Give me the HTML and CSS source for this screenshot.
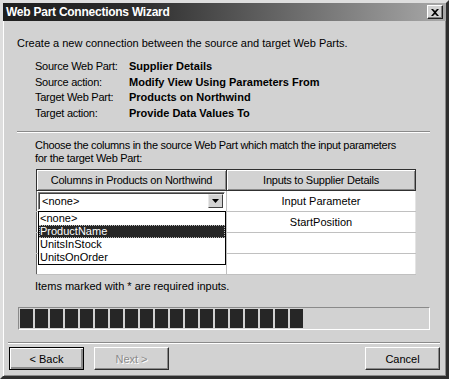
FILE: index.html
```html
<!DOCTYPE html>
<html>
<head>
<meta charset="utf-8">
<link rel="stylesheet" href="styles.css">
</head>
<body>
<div class="window">
  <div class="titlebar">
    <span class="title">Web Part Connections Wizard</span>
    <span class="close"><svg width="8" height="7" viewBox="0 0 8 7"><path d="M0 0h2l2 2 2-2h2L5 3.5 8 7H6L4 5 2 7H0l3-3.5z" fill="#000"/></svg></span>
  </div>
  <div class="content">
    <p class="intro">Create a new connection between the source and target Web Parts.</p>
    <div class="info">
      <span class="lbl">Source Web Part:</span><span class="val">Supplier Details</span>
      <span class="lbl">Source action:</span><span class="val">Modify View Using Parameters From</span>
      <span class="lbl">Target Web Part:</span><span class="val">Products on Northwind</span>
      <span class="lbl">Target action:</span><span class="val">Provide Data Values To</span>
    </div>
    <div class="sep"></div>
    <p class="choose">Choose the columns in the source Web Part which match the input parameters<br>for the target Web Part:</p>
    <div class="grid-wrap">
      <table class="map">
        <thead>
          <tr><th class="c1">Columns in Products on Northwind</th><th class="c2">Inputs to Supplier Details</th></tr>
        </thead>
        <tbody>
          <tr><td class="c1 combo-cell"><div class="combo"><span class="combo-text">&lt;none&gt;</span><span class="combo-btn"><svg width="7" height="4" viewBox="0 0 7 4"><path d="M0 0h7L3.5 4z" fill="#000"/></svg></span></div></td><td class="c2">Input Parameter</td></tr>
          <tr><td class="c1"></td><td class="c2">StartPosition</td></tr>
          <tr><td class="c1"></td><td class="c2"></td></tr>
          <tr><td class="c1"></td><td class="c2"></td></tr>
        </tbody>
      </table>
      <ul class="dropdown">
        <li>&lt;none&gt;</li>
        <li class="selected">ProductName</li>
        <li>UnitsInStock</li>
        <li>UnitsOnOrder</li>
      </ul>
    </div>
    <p class="note">Items marked with * are required inputs.</p>
    <div class="progress">
      <span class="blk"></span><span class="blk"></span><span class="blk"></span><span class="blk"></span><span class="blk"></span><span class="blk"></span><span class="blk"></span><span class="blk"></span><span class="blk"></span><span class="blk"></span><span class="blk"></span><span class="blk"></span><span class="blk"></span><span class="blk"></span><span class="blk"></span><span class="blk"></span><span class="blk"></span><span class="blk"></span><span class="blk"></span>
    </div>
  </div>
  <div class="footer">
    <div class="sep wide"></div>
    <div class="buttons">
      <button class="btn default">&lt; Back</button>
      <button class="btn disabled">Next &gt;</button>
      <span class="spacer"></span>
      <button class="btn">Cancel</button>
    </div>
  </div>
</div>
</body>
</html>
```

FILE: styles.css
```css
* { box-sizing: border-box; }
html, body { margin: 0; padding: 0; background: #d2d2d2; }
body { font-family: "Liberation Sans", Arial, sans-serif; font-size: 11px; color: #000; }

.window {
  width: 449px;
  height: 379px;
  background: #d2d2d2;
  border-style: solid;
  border-width: 3px;
  border-color: #dedede #2e2e2e #2e2e2e #dedede;
  box-shadow: inset 1px 1px 0 #fff, inset -1px -1px 0 #8a8a8a;
  display: flex;
  flex-direction: column;
}

.titlebar {
  height: 18px;
  background: linear-gradient(to right, #1e1e1e 0%, #2c2c2c 30%, #a8a8a8 100%);
  display: flex;
  align-items: center;
  justify-content: space-between;
  padding: 0 3px 0 3px;
}
.title {
  color: #fff;
  font-weight: bold;
  font-size: 12px;
  letter-spacing: -0.25px;
  line-height: 18px;
}
.close {
  width: 16px;
  height: 14px;
  background: #d2d2d2;
  border: 1px solid;
  border-color: #fff #202020 #202020 #fff;
  box-shadow: inset -1px -1px 0 #808080;
  display: flex;
  align-items: center;
  justify-content: center;
}

.content {
  padding: 0 16px 0 14px;
}

p { margin: 0; }

.intro {
  margin-top: 16px;
  line-height: 13px;
}

.info {
  margin-top: 9px;
  margin-left: 18px;
  display: grid;
  grid-template-columns: 94px auto;
  line-height: 15.5px;
}
.lbl { letter-spacing: -0.25px; }
.val { font-weight: bold; }

.sep {
  margin-top: 10px;
  height: 2px;
  border-top: 1px solid #8a8a8a;
  border-bottom: 1px solid #fff;
}

.choose {
  margin-top: 6px;
  margin-left: 18px;
  line-height: 13px;
  letter-spacing: -0.3px;
}

.grid-wrap {
  position: relative;
  margin-top: 4px;
  margin-left: 19px;
  width: 380px;
}

.map {
  border-collapse: collapse;
  width: 380px;
  table-layout: fixed;
  background: #fff;
  border-left: 1px solid #606060;
  border-right: 1px solid #e4e4e4;
  border-bottom: 1px solid #e4e4e4;
}
.map th {
  height: 21px;
  padding: 0;
  font-weight: normal;
  letter-spacing: -0.25px;
  background: #d2d2d2;
  border: 1px solid #303030;
  box-shadow: inset 1px 1px 0 #fff, inset -1px -1px 0 #8a8a8a;
  text-align: center;
}
.map th.c1 { width: 190px; }
.map td {
  height: 21px;
  padding: 0;
  text-align: center;
  border-right: 1px solid #c0c0c0;
  border-bottom: 1px solid #c0c0c0;
}
.map td.c2 { border-right: none; }
.map td.combo-cell { padding: 1px 0 1px 1px; }

.combo {
  height: 18px;
  display: flex;
  align-items: stretch;
  background: #fff;
  border: 1px solid;
  border-color: #808080 #fff #fff #808080;
  box-shadow: inset 1px 1px 0 #404040;
  margin-right: 1px;
}
.combo-text {
  flex: 1;
  text-align: left;
  padding-left: 3px;
  line-height: 16px;
}
.combo-btn {
  width: 15px;
  margin: 1px 1px 1px 0;
  background: #d2d2d2;
  border: 1px solid;
  border-color: #e8e8e8 #404040 #404040 #e8e8e8;
  display: flex;
  align-items: center;
  justify-content: center;
}

.dropdown {
  position: absolute;
  left: 2px;
  top: 42px;
  width: 188px;
  margin: 0;
  padding: 0;
  list-style: none;
  background: #fff;
  border: 1px solid #000;
}
.dropdown li {
  height: 13px;
  line-height: 13px;
  padding-left: 1px;
}
.dropdown li.selected {
  background: #262626;
  color: #fff;
  outline: 1px dotted #bbb;
  outline-offset: -1px;
}

.note {
  margin-top: 5px;
  margin-left: 18px;
  line-height: 13px;
}

.progress {
  margin-top: 14px;
  margin-left: 1px;
  height: 23px;
  border: 1px solid;
  border-color: #8a8a8a #fff #fff #8a8a8a;
  display: flex;
  align-items: stretch;
  gap: 2px;
  padding: 1px 1px;
}
.blk {
  width: 13px;
  background: #262626;
}

.footer {
  padding: 0 6px 0 5px;
}
.sep.wide {
  margin-top: 12px;
}
.buttons {
  margin-top: 3px;
  display: flex;
  padding-left: 1px;
  gap: 10px;
}
.spacer { flex: 1; }
.btn {
  width: 75px;
  height: 23px;
  font-family: "Liberation Sans", Arial, sans-serif;
  font-size: 11px;
  background: #d2d2d2;
  color: #000;
  border: 1px solid;
  border-color: #fff #303030 #303030 #fff;
  box-shadow: inset -1px -1px 0 #8a8a8a;
  padding: 0;
}
.btn.default {
  border: 1px solid #000;
  box-shadow: inset 1px 1px 0 #fff, inset -2px -2px 0 #8a8a8a;
}
.btn.disabled {
  color: #8a8a8a;
  text-shadow: 1px 1px 0 #fff;
}
```
